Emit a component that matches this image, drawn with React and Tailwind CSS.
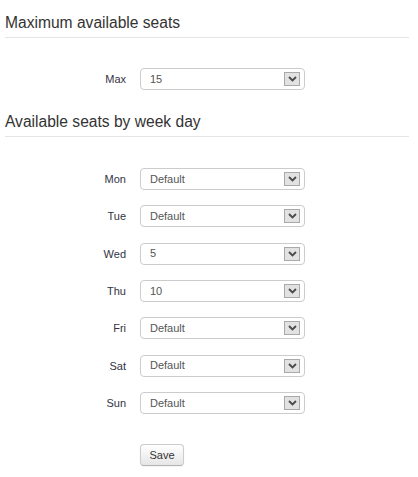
import React, { useState } from 'react';

const DAYS = [
  { key: 'mon', label: 'Mon', value: 'Default' },
  { key: 'tue', label: 'Tue', value: 'Default' },
  { key: 'wed', label: 'Wed', value: '5' },
  { key: 'thu', label: 'Thu', value: '10' },
  { key: 'fri', label: 'Fri', value: 'Default' },
  { key: 'sat', label: 'Sat', value: 'Default' },
  { key: 'sun', label: 'Sun', value: 'Default' },
];

const OPTIONS = ['Default', '0', '1', '2', '3', '4', '5', '6', '7', '8', '9', '10', '11', '12', '13', '14', '15'];

const SeatSelect = ({ value, onChange, options }) => (
  <div className="relative w-[165px] h-[22px]">
    <select
      value={value}
      onChange={(e) => onChange(e.target.value)}
      className="block appearance-none w-full h-full border border-[#cccccc] rounded-[4px] bg-white pl-[9px] pr-[24px] text-[11px] text-[#555555] outline-none"
    >
      {options.map((o) => (
        <option key={o} value={o}>{o}</option>
      ))}
    </select>
    <span className="pointer-events-none absolute right-[5px] top-[4px] w-[16px] h-[14px] flex items-center justify-center bg-[#e2e2e2] border border-[#a9a9a9]">
      <svg width="9" height="6" viewBox="0 0 9 6">
        <path d="M1 1 L4.5 4.5 L8 1" fill="none" stroke="#4a4a4a" strokeWidth="1.8" />
      </svg>
    </span>
  </div>
);

const Row = ({ label, children }) => (
  <div className="flex items-center h-[22px]">
    <label className="w-[121px] text-right text-[11px] leading-[14px] text-[#333344]">{label}</label>
    <div className="ml-[14px]">{children}</div>
  </div>
);

const App = () => {
  const [max, setMax] = useState('15');
  const [days, setDays] = useState(
    Object.fromEntries(DAYS.map((d) => [d.key, d.value]))
  );

  return (
    <div className="pl-[5px] w-[409px] bg-white font-['Liberation_Sans',Arial,sans-serif]">
      <h2 className="pt-[13px] pb-[4px] leading-[20px] text-[15.6px] font-normal text-[#333333] border-b border-[#e5e5e5]">
        Maximum available seats
      </h2>

      <div className="mt-[30px]">
        <Row label="Max">
          <SeatSelect value={max} onChange={setMax} options={OPTIONS.slice(1)} />
        </Row>
      </div>

      <h2 className="mt-[22px] pb-[4px] leading-[20px] text-[15.6px] font-normal text-[#333333] border-b border-[#e5e5e5]">
        Available seats by week day
      </h2>

      <div className="mt-[31px] flex flex-col gap-[15.33px]">
        {DAYS.map((d) => (
          <Row key={d.key} label={d.label}>
            <SeatSelect
              value={days[d.key]}
              onChange={(v) => setDays({ ...days, [d.key]: v })}
              options={OPTIONS}
            />
          </Row>
        ))}
      </div>

      <div className="mt-[30px] pl-[135px] pb-[12px]">
        <button className="block w-[44px] h-[22px] rounded-[4px] border border-[#cccccc] border-b-[#b3b3b3] bg-gradient-to-b from-white to-[#e6e6e6] text-[11px] text-[#333333] shadow-[inset_0_1px_0_rgba(255,255,255,0.2),0_1px_2px_rgba(0,0,0,0.05)]">
          Save
        </button>
      </div>
    </div>
  );
};

export default App;
